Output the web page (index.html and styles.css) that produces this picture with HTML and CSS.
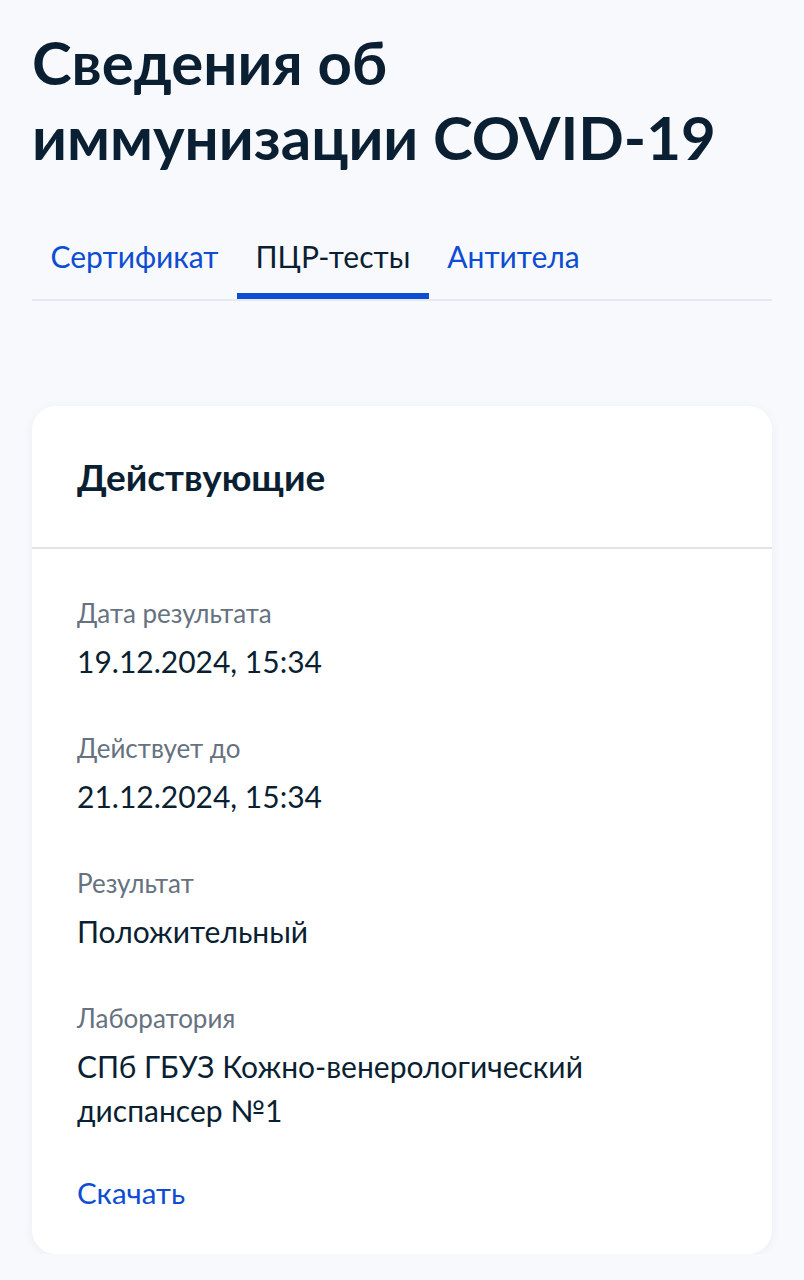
FILE: index.html
```html
<!DOCTYPE html>
<html lang="ru">
<head>
<meta charset="utf-8">
<title>Сведения об иммунизации COVID-19</title>
<link rel="stylesheet" href="styles.css">
</head>
<body>
<main class="page">
  <h1 class="title">Сведения об иммунизации COVID-19</h1>
  <nav class="tabs">
    <a class="tab">Сертификат</a>
    <a class="tab tab-active">ПЦР-тесты</a>
    <a class="tab">Антитела</a>
  </nav>
  <section class="card">
    <header class="card-head">
      <h2 class="card-title">Действующие</h2>
    </header>
    <div class="card-body">
      <div class="field">
        <div class="label">Дата результата</div>
        <div class="value">19.12.2024, 15:34</div>
      </div>
      <div class="field">
        <div class="label">Действует до</div>
        <div class="value">21.12.2024, 15:34</div>
      </div>
      <div class="field">
        <div class="label">Результат</div>
        <div class="value">Положительный</div>
      </div>
      <div class="field">
        <div class="label">Лаборатория</div>
        <div class="value">СПб ГБУЗ Кожно-венерологический<br>диспансер №1</div>
      </div>
      <a class="link">Скачать</a>
    </div>
  </section>
</main>
</body>
</html>
```
FILE: styles.css
```css
* { box-sizing: border-box; }
html, body {
  margin: 0;
  padding: 0;
  background: #f8f9fd;
}
body {
  font-family: Lato, "Noto Sans", sans-serif;
  color: #0b1f33;
}
.page {
  padding: 25px 32px 0;
}
.title {
  margin: 0;
  font-size: 60px;
  line-height: 75px;
  font-weight: 700;
  color: #0b1f33;
}
.tabs {
  display: flex;
  margin-top: 59px;
  border-bottom: 2px solid #e6e9ee;
}
.tab {
  display: block;
  padding: 0 18.5px 15px;
  font-size: 30px;
  line-height: 44px;
  color: #0d4cd3;
  border-bottom: 6px solid transparent;
}
.tab-active {
  color: #0b1f33;
  border-bottom-color: #0d4cd3;
}
.card {
  margin-top: 105px;
  background: #ffffff;
  border-radius: 24px;
  box-shadow: 0 2px 12px rgba(11, 31, 51, 0.05);
}
.card-head {
  height: 143px;
  display: flex;
  align-items: center;
  padding: 0 45px;
  border-bottom: 2px solid #e1e4e8;
}
.card-title {
  margin: 0;
  font-size: 37px;
  line-height: 44px;
  font-weight: 700;
  color: #0b1f33;
}
.card-body {
  padding: 46px 45px 39px;
  display: flex;
  flex-direction: column;
}
.field {
  margin-bottom: 47px;
}
.label {
  font-size: 26px;
  line-height: 36px;
  color: #66727f;
  margin-bottom: 8px;
}
.value {
  font-size: 30px;
  line-height: 44px;
  color: #0b1f33;
}
.field:nth-of-type(4) {
  margin-bottom: 39px;
}
.link {
  font-size: 29.5px;
  line-height: 44px;
  color: #0d4cd3;
}
```
